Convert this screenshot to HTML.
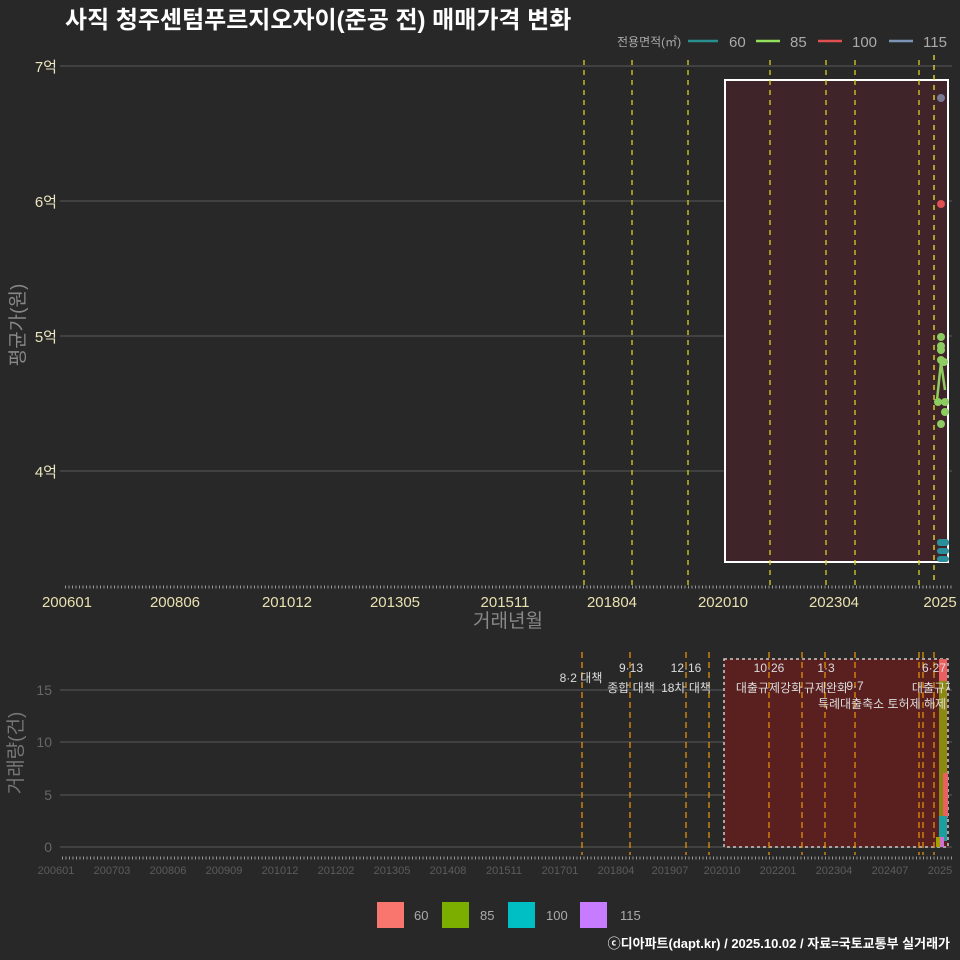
<!DOCTYPE html>
<html><head><meta charset="utf-8"><style>
body{margin:0;background:#262626;}
svg{display:block;font-family:"Liberation Sans","Noto Sans CJK KR",sans-serif;}
</style></head><body>
<svg width="960" height="960" viewBox="0 0 960 960">
<defs><clipPath id="c"><rect x="0" y="640" width="950" height="240"/></clipPath></defs>
<rect width="960" height="960" fill="#282828"/>
<text x="65" y="28" font-size="24" font-weight="bold" fill="#fff">사직 청주센텀푸르지오자이(준공 전) 매매가격 변화</text>
<g font-size="15" fill="#aaa">
<text x="617" y="46" font-size="12">전용면적(㎡)</text>
<line x1="688" y1="41" x2="718" y2="41" stroke="#2a8f8f" stroke-width="2.5"/><text x="729" y="47">60</text>
<line x1="756" y1="41" x2="780" y2="41" stroke="#8fe05a" stroke-width="2.5"/><text x="790" y="47">85</text>
<line x1="818" y1="41" x2="842" y2="41" stroke="#e05050" stroke-width="2.5"/><text x="852" y="47">100</text>
<line x1="889" y1="41" x2="913" y2="41" stroke="#7a95b5" stroke-width="2.5"/><text x="923" y="47">115</text>
</g>
<g stroke="#5a5a5a" stroke-width="1">
<line x1="60" y1="66" x2="952" y2="66"/><line x1="60" y1="201" x2="952" y2="201"/>
<line x1="60" y1="336" x2="952" y2="336"/><line x1="60" y1="471" x2="952" y2="471"/>
</g>
<g font-size="15" fill="#ece6c0" text-anchor="end">
<text x="57" y="72">7억</text><text x="57" y="207">6억</text><text x="57" y="342">5억</text><text x="57" y="477">4억</text>
</g>
<text transform="translate(24,325) rotate(-90)" font-size="19" fill="#888" text-anchor="middle">평균가(원)</text>
<rect x="725" y="80" width="223" height="482" fill="#3f2429" stroke="#fff" stroke-width="2"/>
<g stroke="#d8d020" stroke-width="1.3" stroke-dasharray="5,5">
<line x1="584" y1="60" x2="584" y2="585"/><line x1="632" y1="60" x2="632" y2="585"/>
<line x1="688" y1="60" x2="688" y2="585"/><line x1="770" y1="60" x2="770" y2="585"/>
<line x1="826" y1="60" x2="826" y2="585"/><line x1="855" y1="60" x2="855" y2="585"/>
<line x1="919" y1="60" x2="919" y2="585"/><line x1="934" y1="55" x2="934" y2="585" stroke="#f0e030"/>
</g>
<g fill="#8ccc60">
<circle cx="941" cy="337" r="4"/><circle cx="941" cy="346" r="4"/><circle cx="941" cy="350" r="4"/>
<circle cx="941" cy="360" r="4"/><circle cx="944" cy="362" r="4"/><circle cx="938" cy="402" r="4"/>
<circle cx="945" cy="402" r="4"/><circle cx="945" cy="412" r="4"/><circle cx="941" cy="424" r="4"/>
</g>
<polyline points="937,400 941,362 945,390" fill="none" stroke="#8ccc60" stroke-width="2.5"/>
<circle cx="941" cy="204" r="4" fill="#e05050"/><circle cx="941" cy="98" r="4" fill="#7a7a95"/>
<g fill="#2a8f9a"><rect x="937" y="539" width="12" height="7" rx="3"/><rect x="937" y="548" width="12" height="6" rx="3"/><rect x="937" y="556" width="12" height="6" rx="3"/></g>
<line x1="65" y1="587" x2="952" y2="587" stroke="#999" stroke-width="3" stroke-dasharray="1,2.5"/>
<g font-size="15" fill="#e8e0b0" text-anchor="middle">
<text x="67" y="607">200601</text><text x="175" y="607">200806</text><text x="287" y="607">201012</text>
<text x="395" y="607">201305</text><text x="505" y="607">201511</text><text x="612" y="607">201804</text>
<text x="723" y="607">202010</text><text x="834" y="607">202304</text><text x="940" y="607">2025</text>
</g>
<text x="508" y="627" font-size="19" fill="#888" text-anchor="middle">거래년월</text>
<g stroke="#5a5a5a"><line x1="60" y1="690" x2="952" y2="690"/><line x1="60" y1="742" x2="952" y2="742"/><line x1="60" y1="795" x2="952" y2="795"/><line x1="60" y1="847" x2="952" y2="847"/></g>
<g font-size="14" fill="#666" text-anchor="end"><text x="52" y="695">15</text><text x="52" y="747">10</text><text x="52" y="800">5</text><text x="52" y="852">0</text></g>
<text transform="translate(22,753) rotate(-90)" font-size="19" fill="#777" text-anchor="middle">거래량(건)</text>
<rect x="724" y="659" width="224" height="188" fill="#5a1f1f" stroke="#ccc" stroke-width="1.5" stroke-dasharray="3,3"/>
<g stroke="#e0900a" stroke-width="1.3" stroke-dasharray="6,4">
<line x1="582" y1="652" x2="582" y2="855"/><line x1="630" y1="652" x2="630" y2="855"/>
<line x1="686" y1="652" x2="686" y2="855"/><line x1="709" y1="652" x2="709" y2="855"/>
<line x1="769" y1="652" x2="769" y2="855"/><line x1="802" y1="652" x2="802" y2="855"/>
<line x1="825" y1="652" x2="825" y2="855"/><line x1="855" y1="652" x2="855" y2="855"/>
<line x1="919" y1="652" x2="919" y2="855"/><line x1="923" y1="652" x2="923" y2="855"/>
<line x1="934" y1="652" x2="934" y2="855"/>
</g>
<rect x="939" y="659" width="8" height="22" fill="#e86060"/>
<rect x="939" y="681" width="8" height="160" fill="#8a8a10"/>
<rect x="943" y="773" width="5" height="45" fill="#e86060"/>
<rect x="939" y="816" width="8" height="25" fill="#1aa0a0"/>
<rect x="936" y="837" width="4" height="10" fill="#a0a000"/><rect x="940" y="837" width="4" height="10" fill="#d070d0"/>
<g font-size="12" fill="#ddd" text-anchor="middle" clip-path="url(#c)">
<text x="581" y="682">8·2 대책</text><text x="631" y="672">9·13</text><text x="631" y="692">종합 대책</text>
<text x="686" y="672">12·16</text><text x="686" y="692">18차 대책</text>
<text x="769" y="692">대출규제강화</text><text x="769" y="672">10·26</text>
<text x="826" y="672">1·3</text><text x="826" y="692">규제완화</text><text x="855" y="690">9·7</text>
<text x="882" y="708">특례대출축소 토허제 해제</text>
<text x="934" y="672">6·27</text><text x="934" y="692">대출규제</text>
</g>
<line x1="62" y1="858" x2="952" y2="858" stroke="#999" stroke-width="3" stroke-dasharray="1,2.5"/>
<g font-size="11" fill="#5c5c5c" text-anchor="middle">
<text x="56" y="874">200601</text><text x="112" y="874">200703</text><text x="168" y="874">200806</text>
<text x="224" y="874">200909</text><text x="280" y="874">201012</text><text x="336" y="874">201202</text>
<text x="392" y="874">201305</text><text x="448" y="874">201408</text><text x="504" y="874">201511</text>
<text x="560" y="874">201701</text><text x="616" y="874">201804</text><text x="670" y="874">201907</text>
<text x="722" y="874">202010</text><text x="778" y="874">202201</text><text x="834" y="874">202304</text>
<text x="890" y="874">202407</text><text x="940" y="874">2025</text>
</g>
<g font-size="13" fill="#aaa">
<rect x="377" y="902" width="27" height="26" fill="#f8766d"/><text x="414" y="920">60</text>
<rect x="442" y="902" width="27" height="26" fill="#7cae00"/><text x="480" y="920">85</text>
<rect x="508" y="902" width="27" height="26" fill="#00bfc4"/><text x="546" y="920">100</text>
<rect x="580" y="902" width="27" height="26" fill="#c77cff"/><text x="620" y="920">115</text>
</g>
<text x="950" y="948" font-size="13" font-weight="bold" fill="#fff" text-anchor="end">ⓒ디아파트(dapt.kr) / 2025.10.02 / 자료=국토교통부 실거래가</text>
</svg>
</body></html>
